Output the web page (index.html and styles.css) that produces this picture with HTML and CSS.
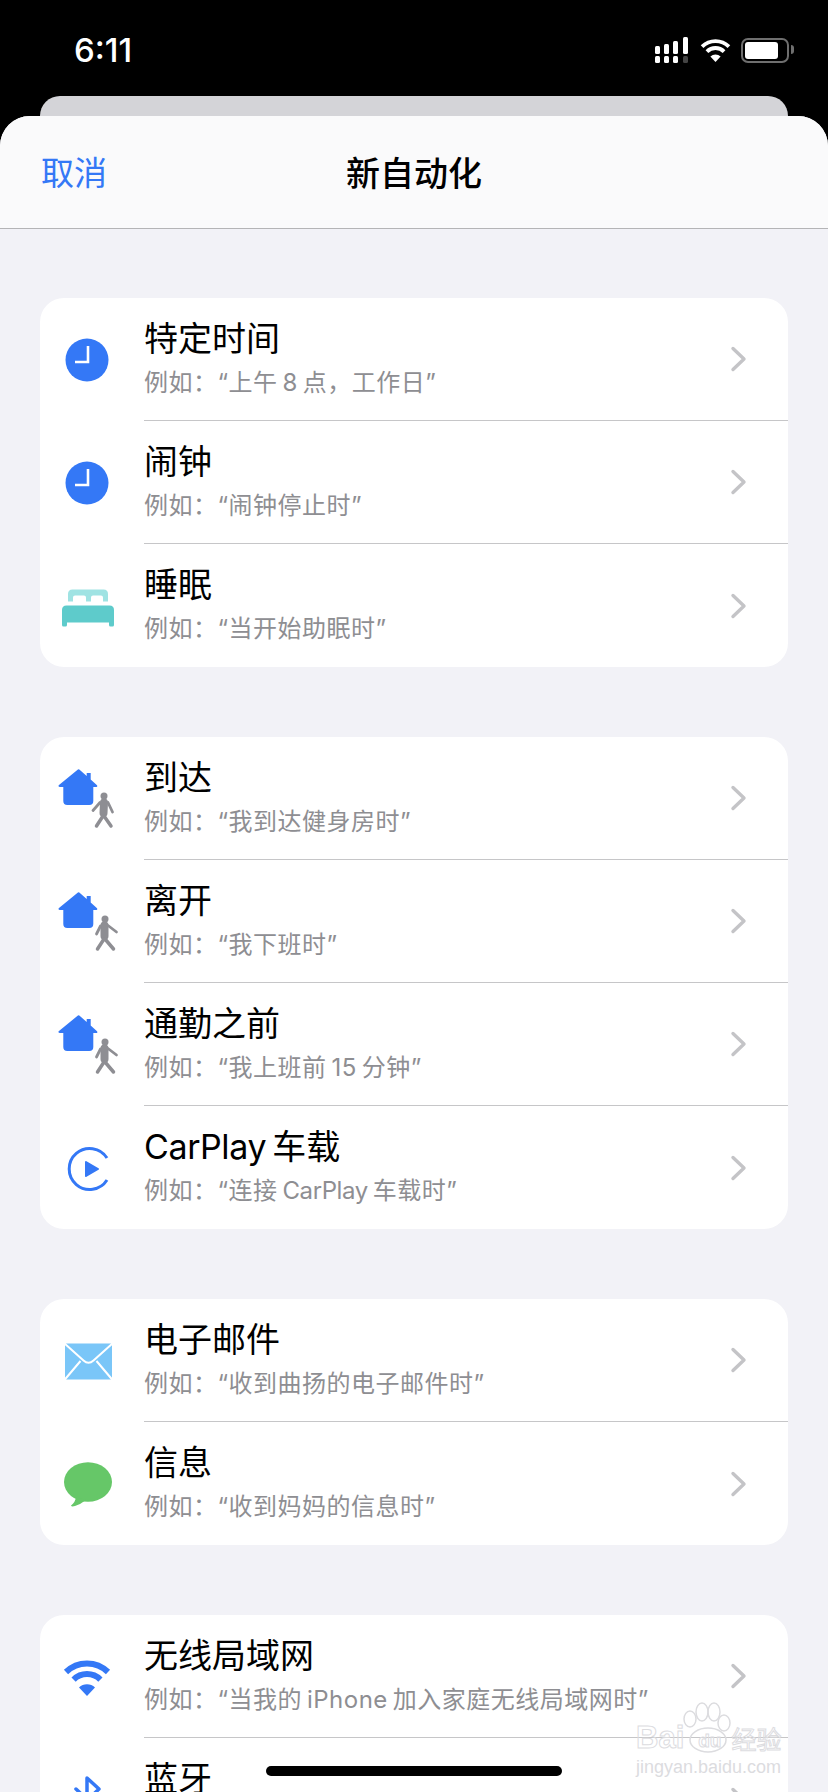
FILE: index.html
```html
<!DOCTYPE html>
<html lang="zh-CN">
<head>
    <meta charset="UTF-8">
    <meta name="viewport" content="width=device-width, initial-scale=1.0">
    <title>新自动化</title>
    <link rel="stylesheet" href="styles.css">
</head>
<body>
    <svg class="defs" width="0" height="0" aria-hidden="true">
        <defs>
            <symbol id="i-clock" viewBox="0 0 60 60">
                <circle cx="30" cy="30" r="21.5" fill="#3478f6"/>
                <path d="M31 16V32H18" fill="none" stroke="#fff" stroke-width="2.6"/>
            </symbol>
            <symbol id="i-home" viewBox="0 0 60 60">
                <path d="M22.3 .5 29.7 7V4h4v6.6l6.3 5.6q1 1.3-.4 1.7h-3.3V32q0 4-4 4H10.300q-4 0-4-4V17.900H2.600q-1.900-.4-.9-1.700L20.300 1q1-1 2 -.5Z" fill="#3478f6"/>
            </symbol>
            <symbol id="i-wifi" viewBox="6 13 48 36">
                <path d="M9 25A30 30 0 0 1 51 25M16.600 32.600A19 19 0 0 1 43.400 32.600" fill="none" stroke="currentColor" stroke-width="6"/>
                <path d="M30 49 22 40.500A11.500 11.500 0 0 1 38 40.500Z" fill="currentColor"/>
            </symbol>
            <symbol id="i-chev" viewBox="0 0 17 26">
                <path d="M3 2.500 14 13 3 23.500" fill="none" stroke="#c4c4c7" stroke-width="3.400" stroke-linecap="round" stroke-linejoin="round"/>
            </symbol>
        </defs>
    </svg>

    <div class="phone">
        <header class="status">
            <span class="time">6:11</span>
            <div class="status-icons">
                <svg class="signal" width="33" height="26" viewBox="0 0 33 26">
                    <g fill="#fff">
                        <rect x="0" y="9" width="5" height="8" rx="1.500"/>
                        <rect x="9" y="7" width="5" height="10" rx="1.500"/>
                        <rect x="18" y="4" width="5" height="13" rx="1.500"/>
                        <rect x="28" y="0" width="5" height="17" rx="1.500"/>
                        <rect x="0" y="19" width="5" height="7" rx="1.500"/>
                        <rect x="9" y="19" width="5" height="7" rx="1.500"/>
                        <rect x="18" y="19" width="5" height="7" rx="1.500"/>
                    </g>
                    <rect x="28" y="19" width="5" height="7" rx="1.500" fill="#444"/>
                </svg>
                <svg class="status-wifi" width="31" height="23"><use href="#i-wifi" width="31" height="23"/></svg>
                <div class="battery"><div class="battery-fill"></div></div>
            </div>
        </header>

        <div class="peek"></div>

        <main class="sheet">
            <nav class="navbar">
                <a href="#" class="nav-cancel">取消</a>
                <h1 class="nav-title">新自动化</h1>
            </nav>

            <section class="card">
                <a href="#" class="row">
                    <svg class="row-icon"><use href="#i-clock"/></svg>
                    <div class="row-body">
                        <div class="row-text">
                            <div class="row-title">特定时间</div>
                            <div class="row-sub">例如：“上午&thinsp;8&thinsp;点，工作日”</div>
                        </div>
                        <svg class="chevron"><use href="#i-chev"/></svg>
                    </div>
                </a>
                <a href="#" class="row">
                    <svg class="row-icon"><use href="#i-clock"/></svg>
                    <div class="row-body">
                        <div class="row-text">
                            <div class="row-title">闹钟</div>
                            <div class="row-sub">例如：“闹钟停止时”</div>
                        </div>
                        <svg class="chevron"><use href="#i-chev"/></svg>
                    </div>
                </a>
                <a href="#" class="row">
                    <svg class="row-icon" viewBox="0 0 60 60">
                        <path d="M11 25.500V18q0-4.500 4.500-4.500h31q4.500 0 4.500 4.500v7.500h-5V21.500q0-2-2-2H36q-2 0-2 2v4h-5v-4q0-2-2-2H18q-2 0-2 2v4Z" fill="#9fe3e3"/>
                        <path d="M5 34q0-4.500 4.500-4.500h43Q57 29.500 57 34v15q0 1.500-1.500 1.500h-2q-1.500 0-1.500-1.500v-2.500H10V49q0 1.500-1.500 1.500h-2Q5 50.500 5 49Z" fill="#5ecbcb"/>
                    </svg>
                    <div class="row-body">
                        <div class="row-text">
                            <div class="row-title">睡眠</div>
                            <div class="row-sub">例如：“当开始助眠时”</div>
                        </div>
                        <svg class="chevron"><use href="#i-chev"/></svg>
                    </div>
                </a>
            </section>

            <section class="card">
                <a href="#" class="row">
                    <svg class="row-icon" viewBox="0 0 60 60">
                        <use href="#i-home" width="60" height="60"/>
                        <g fill="none" stroke="#8e8e93" stroke-linecap="round" stroke-linejoin="round">
                            <path d="M47 33.500 46.500 44" stroke-width="8"/>
                            <path d="M46 47 39.500 57M47 47 54 57" stroke-width="3.500"/>
                            <path d="M43 33.500 36 41.500M51 33.500 55.500 43" stroke-width="2.800"/>
                        </g>
                        <circle cx="47" cy="27" r="3.500" fill="#8e8e93"/>
                    </svg>
                    <div class="row-body">
                        <div class="row-text">
                            <div class="row-title">到达</div>
                            <div class="row-sub">例如：“我到达健身房时”</div>
                        </div>
                        <svg class="chevron"><use href="#i-chev"/></svg>
                    </div>
                </a>
                <a href="#" class="row">
                    <svg class="row-icon" viewBox="0 0 60 60">
                        <use href="#i-home" width="60" height="60"/>
                        <g fill="none" stroke="#8e8e93" stroke-linecap="round" stroke-linejoin="round">
                            <path d="M47.500 33.500 47.500 44" stroke-width="8"/>
                            <path d="M47 47 40.500 57M48 47 56.500 57" stroke-width="3.500"/>
                            <path d="M43.500 34 39.500 42M51 33.500 59.500 40" stroke-width="2.800"/>
                        </g>
                        <circle cx="48" cy="27" r="3.500" fill="#8e8e93"/>
                    </svg>
                    <div class="row-body">
                        <div class="row-text">
                            <div class="row-title">离开</div>
                            <div class="row-sub">例如：“我下班时”</div>
                        </div>
                        <svg class="chevron"><use href="#i-chev"/></svg>
                    </div>
                </a>
                <a href="#" class="row">
                    <svg class="row-icon" viewBox="0 0 60 60">
                        <use href="#i-home" width="60" height="60"/>
                        <g fill="none" stroke="#8e8e93" stroke-linecap="round" stroke-linejoin="round">
                            <path d="M47.500 33.500 47.500 44" stroke-width="8"/>
                            <path d="M47 47 40.500 57M48 47 56.500 57" stroke-width="3.500"/>
                            <path d="M43.500 34 39.500 42M51 33.500 59.500 40" stroke-width="2.800"/>
                        </g>
                        <circle cx="48" cy="27" r="3.500" fill="#8e8e93"/>
                    </svg>
                    <div class="row-body">
                        <div class="row-text">
                            <div class="row-title">通勤之前</div>
                            <div class="row-sub">例如：“我上班前&thinsp;15&thinsp;分钟”</div>
                        </div>
                        <svg class="chevron"><use href="#i-chev"/></svg>
                    </div>
                </a>
                <a href="#" class="row">
                    <svg class="row-icon" viewBox="0 0 60 60">
                        <path d="M50 20A20.500 20.500 0 1 0 50 42" fill="none" stroke="#3478f6" stroke-width="3"/>
                        <path d="M29 24 41 31 29 38Z" fill="#3478f6" stroke="#3478f6" stroke-width="2" stroke-linejoin="round"/>
                    </svg>
                    <div class="row-body">
                        <div class="row-text">
                            <div class="row-title"><span class="latin">CarPlay</span>&thinsp;车载</div>
                            <div class="row-sub">例如：“连接&thinsp;<span class="latin">CarPlay</span>&thinsp;车载时”</div>
                        </div>
                        <svg class="chevron"><use href="#i-chev"/></svg>
                    </div>
                </a>
            </section>

            <section class="card">
                <a href="#" class="row">
                    <svg class="row-icon" viewBox="0 0 60 60">
                        <rect x="8" y="12.500" width="47" height="36" rx="1.500" fill="#7ac6f8"/>
                        <path d="M7 12 26.500 29.500Q31.500 34 36.500 29.500L56 12M7 49.500 23.500 30M56 49.500 39.500 30" fill="none" stroke="#fff" stroke-width="2"/>
                    </svg>
                    <div class="row-body">
                        <div class="row-text">
                            <div class="row-title">电子邮件</div>
                            <div class="row-sub">例如：“收到曲扬的电子邮件时”</div>
                        </div>
                        <svg class="chevron"><use href="#i-chev"/></svg>
                    </div>
                </a>
                <a href="#" class="row">
                    <svg class="row-icon" viewBox="0 0 60 60">
                        <ellipse cx="31" cy="28" rx="24" ry="19.800" fill="#66c768"/>
                        <path d="M19 43Q18.500 48 14 51.500Q14.500 53 18 52Q24 50 29 46Z" fill="#66c768"/>
                    </svg>
                    <div class="row-body">
                        <div class="row-text">
                            <div class="row-title">信息</div>
                            <div class="row-sub">例如：“收到妈妈的信息时”</div>
                        </div>
                        <svg class="chevron"><use href="#i-chev"/></svg>
                    </div>
                </a>
            </section>

            <section class="card">
                <a href="#" class="row">
                    <svg class="row-icon row-icon-wifi"><use href="#i-wifi" x="6" y="13" width="48" height="36"/></svg>
                    <div class="row-body">
                        <div class="row-text">
                            <div class="row-title">无线局域网</div>
                            <div class="row-sub">例如：“当我的&thinsp;iPhone&thinsp;加入家庭无线局域网时”</div>
                        </div>
                        <svg class="chevron"><use href="#i-chev"/></svg>
                    </div>
                </a>
                <a href="#" class="row">
                    <svg class="row-icon" viewBox="0 0 60 60">
                        <path d="M19 19 42 41 30 52V8L42 19 19 41" fill="none" stroke="#3478f6" stroke-width="3.500" stroke-linejoin="round" stroke-linecap="round"/>
                    </svg>
                    <div class="row-body">
                        <div class="row-text">
                            <div class="row-title">蓝牙</div>
                        </div>
                        <svg class="chevron"><use href="#i-chev"/></svg>
                    </div>
                </a>
            </section>
        </main>

        <div class="watermark">
            <svg class="watermark-paw" width="156" height="60" viewBox="0 0 156 60">
                <g fill="none" stroke="#dcdcdf" stroke-width="1.500">
                    <ellipse cx="54" cy="19" rx="6" ry="8"/>
                    <ellipse cx="66" cy="12" rx="6" ry="9"/>
                    <ellipse cx="78" cy="12" rx="6" ry="9"/>
                    <ellipse cx="88" cy="23" rx="6" ry="8"/>
                    <ellipse cx="72" cy="40" rx="18" ry="12"/>
                </g>
            </svg>
            <div class="watermark-brand">
                <span class="wm-bai">Bai</span>
                <span class="wm-du">du</span>
                <span class="wm-cn">经验</span>
            </div>
            <div class="watermark-url">jingyan.baidu.com</div>
        </div>

        <div class="home-bar"></div>
    </div>
</body>
</html>
```

FILE: styles.css
```css
:root {
    --blue: #3478f6;
    --page-bg: #f2f2f7;
    --line: #c6c6c8;
    --text-grey: #8e8e92;
}

* {
    margin: 0;
    padding: 0;
    box-sizing: border-box;
}

html, body {
    height: 100%;
    overflow: hidden;
}

body {
    font-family: Inter, 'Noto Sans CJK SC', sans-serif;
    background: #000;
    color: #000;
}

a {
    color: inherit;
    text-decoration: none;
}

.defs {
    position: absolute;
}

.phone {
    position: relative;
    height: 100vh;
    overflow: hidden;
    display: flex;
    flex-direction: column;
}

/* status bar */
.status {
    height: 96px;
    padding: 4px 34px 0 74px;
    display: flex;
    justify-content: space-between;
    align-items: center;
    flex-shrink: 0;
}

.time {
    font-size: 33px;
    font-weight: 500;
    color: #fff;
}

.status-icons {
    display: flex;
    align-items: center;
}

.signal {
    margin-right: 12px;
}

.status-wifi {
    color: #fff;
    margin-right: 10px;
}

.battery {
    position: relative;
    width: 48px;
    height: 25px;
    border: 2px solid #6f6f6f;
    border-radius: 7px;
    padding: 2px;
    margin-right: 5px;
}

.battery::after {
    content: '';
    position: absolute;
    right: -7px;
    top: 5px;
    width: 3px;
    height: 9px;
    background: #6f6f6f;
    border-radius: 0 3px 3px 0;
}

.battery-fill {
    width: 33px;
    height: 100%;
    background: #fff;
    border-radius: 3px;
}

.peek {
    height: 20px;
    margin: 0 40px;
    background: #d4d4d8;
    border-radius: 20px 20px 0 0;
    flex-shrink: 0;
}

/* sheet */
.sheet {
    flex: 1;
    min-height: 0;
    background: var(--page-bg);
    border-radius: 30px 30px 0 0;
    overflow: hidden;
}

.navbar {
    height: 113px;
    padding-bottom: 2px;
    position: relative;
    display: flex;
    align-items: center;
    justify-content: center;
    background: #fafafb;
    border-bottom: 1.5px solid #b4b4b6;
    margin-bottom: 69px;
}

.nav-cancel {
    position: absolute;
    left: 41px;
    font-size: 33px;
    color: var(--blue);
}

.nav-title {
    font-size: 34px;
    font-weight: 500;
}

.card {
    margin: 0 40px 70px;
    background: #fff;
    border-radius: 24px;
    overflow: hidden;
}

.row {
    height: 123px;
    display: flex;
    align-items: center;
}

.row-icon {
    width: 60px;
    height: 60px;
    margin: 0 27px 0 17px;
    flex-shrink: 0;
    overflow: visible;
}

.row-icon-wifi {
    color: var(--blue);
}

.row-body {
    flex: 1;
    height: 100%;
    display: flex;
    align-items: center;
    justify-content: space-between;
    border-bottom: 1px solid var(--line);
    padding-right: 41px;
}

.row:last-child .row-body {
    border-bottom: none;
}

.row-text {
    height: 100%;
    padding-top: 21px;
}

.row-title {
    font-size: 34px;
    line-height: 40px;
}

.row-sub {
    font-size: 24px;
    line-height: 30px;
    margin-top: 9px;
    letter-spacing: 0.5px;
    color: var(--text-grey);
}

.latin {
    letter-spacing: -0.4px;
}

.chevron {
    width: 17px;
    height: 26px;
}

/* overlays */
.home-bar {
    position: absolute;
    left: 266px;
    top: 1766px;
    width: 296px;
    height: 10px;
    background: #000;
    border-radius: 5px;
}

.watermark {
    position: absolute;
    left: 636px;
    top: 1700px;
    width: 156px;
    font-family: 'Liberation Sans', 'Noto Sans CJK SC', sans-serif;
    color: transparent;
}

.watermark-paw {
    position: absolute;
    left: 0;
    top: 0;
}

.watermark-brand {
    margin-top: 20px;
    height: 36px;
    display: flex;
    align-items: center;
    font-weight: 700;
    white-space: nowrap;
    -webkit-text-stroke: 1px #dcdcdf;
}

.wm-bai {
    font-size: 31px;
}

.wm-du {
    margin-left: 14px;
    font-size: 19px;
    position: relative;
    top: 3px;
}

.wm-cn {
    margin-left: 10px;
    font-size: 25px;
    font-weight: 400;
}

.watermark-url {
    font-size: 18px;
    line-height: 22px;
    white-space: nowrap;
    color: #dcdcdf;
}
```
